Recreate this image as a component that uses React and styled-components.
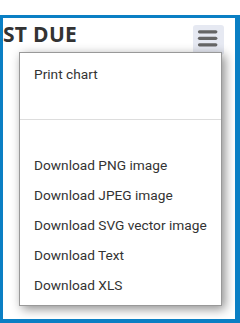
import React from 'react';
import styled, { createGlobalStyle } from 'styled-components';

const GlobalStyle = createGlobalStyle`
  html, body {
    margin: 0;
    padding: 0;
    background: #fff;
  }
`;

const Frame = styled.div`
  position: relative;
  margin-top: 15px;
  height: 308px;
  box-sizing: border-box;
  border-style: solid;
  border-color: #0a7fc4;
  border-width: 3px 5px 4px 3px;
  background: #fff;
  overflow: hidden;
`;

const Header = styled.div`
  display: flex;
  justify-content: space-between;
  align-items: flex-start;
  padding-right: 11px;
`;

const Title = styled.h2`
  margin: 0;
  padding-top: 4px;
  font-family: "Open Sans", "Liberation Sans", sans-serif;
  font-weight: 700;
  font-size: 21px;
  line-height: 24px;
  letter-spacing: 0.3px;
  color: #333;
  white-space: nowrap;
`;

const MenuButton = styled.button`
  margin-top: 7px;
  width: 31px;
  height: 30px;
  padding: 0;
  border: none;
  border-radius: 3px;
  background: #e6e9f2;
  display: flex;
  align-items: flex-start;
  justify-content: center;
  cursor: pointer;
`;

const Menu = styled.ul`
  position: absolute;
  top: 34px;
  left: 16px;
  width: 203px;
  box-sizing: border-box;
  margin: 0;
  padding: 6px 0 5px;
  list-style: none;
  background: #fff;
  border: 1px solid #999;
  box-shadow: 3px 3px 10px rgba(0, 0, 0, 0.45);
`;

const Item = styled.li`
  height: 30px;
  line-height: 30px;
  padding-left: 14px;
  font-family: Roboto, "Liberation Sans", sans-serif;
  font-size: 13.7px;
  color: #333;
  white-space: nowrap;
  cursor: pointer;
`;

const Separator = styled.li`
  height: 1px;
  margin: 30px 0;
  background: #ddd;
`;

const downloads = [
  'Download PNG image',
  'Download JPEG image',
  'Download SVG vector image',
  'Download Text',
  'Download XLS',
];

function HamburgerIcon() {
  return (
    <svg width="31" height="30" viewBox="0 0 31 30">
      <g stroke="#666" strokeWidth="3.2" strokeLinecap="round">
        <line x1="6.5" y1="6.8" x2="22.8" y2="6.8" />
        <line x1="6.5" y1="13.3" x2="22.8" y2="13.3" />
        <line x1="6.5" y1="19.8" x2="22.8" y2="19.8" />
      </g>
    </svg>
  );
}

export default function App() {
  return (
    <>
      <GlobalStyle />
      <Frame>
        <Header>
          <Title>ST DUE</Title>
          <MenuButton aria-label="Chart menu">
            <HamburgerIcon />
          </MenuButton>
        </Header>
        <Menu>
          <Item>Print chart</Item>
          <Separator />
          {downloads.map((label) => (
            <Item key={label}>{label}</Item>
          ))}
        </Menu>
      </Frame>
    </>
  );
}
